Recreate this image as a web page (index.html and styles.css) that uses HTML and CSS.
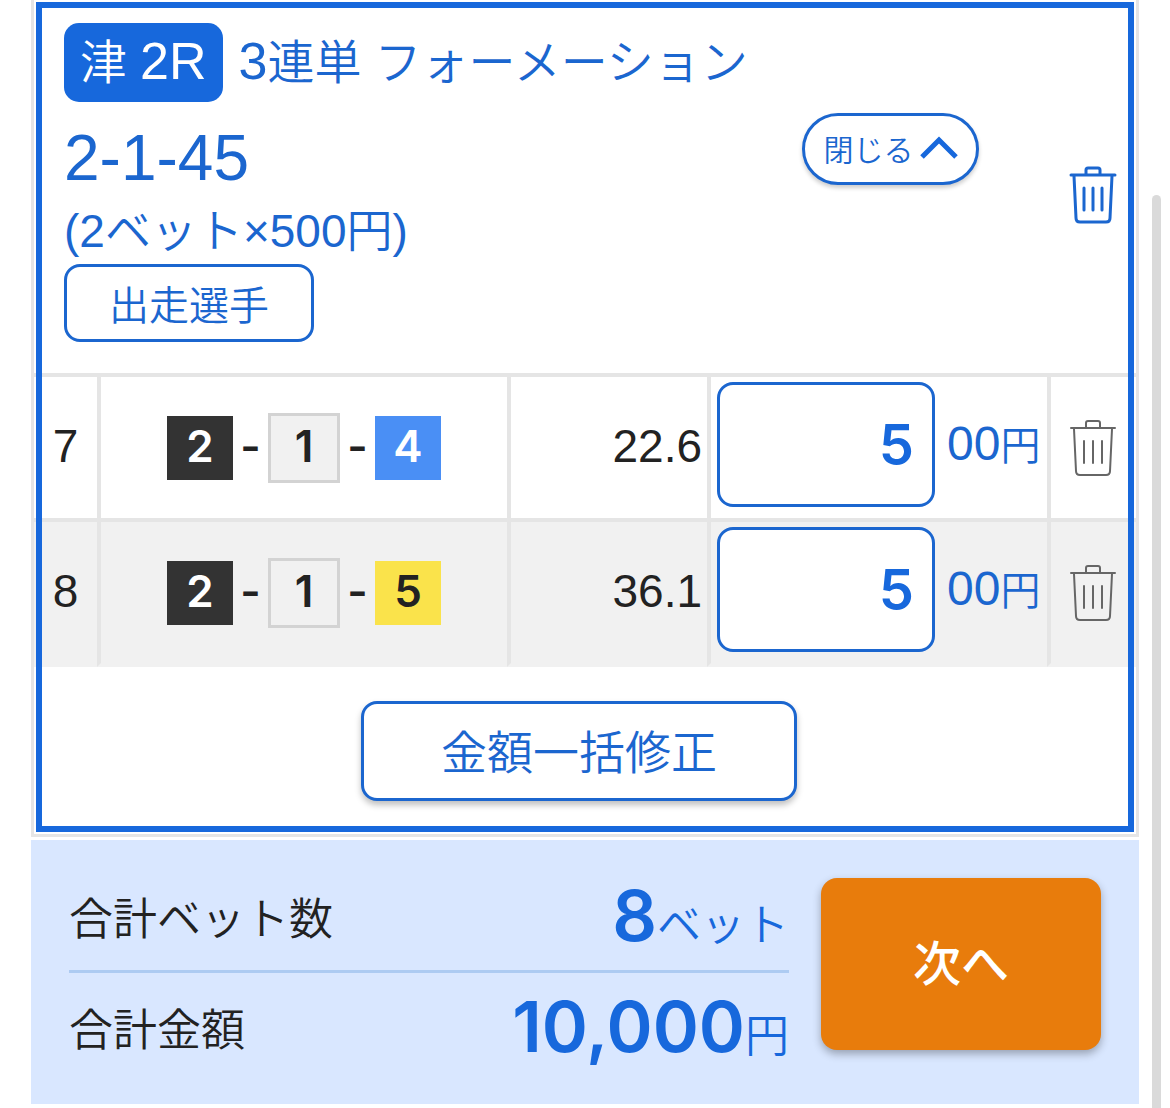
FILE: index.html
```html
<!DOCTYPE html>
<html lang="ja">
<head>
  <meta charset="UTF-8">
  <meta name="viewport" content="width=device-width, initial-scale=1.0">
  <title>ベットリスト</title>
  <link rel="stylesheet" href="styles.css">
</head>
<body>
  <svg class="defs" aria-hidden="true">
    <symbol id="trash" viewBox="0 0 48 58">
      <path d="M2 9H46M17 9V4Q17 2 19 2H29Q31 2 31 4V9M5 10L7 52Q7 56 11 56H37Q41 56 41 52L43 10M15 22V44M24 22V44M33 22V44"/>
    </symbol>
  </svg>

  <main class="bet-card">
    <section class="bet-head">
      <div class="bet-info">
        <h1 class="race"><span class="race-tag">津 <span class="num">2R</span></span><span><span class="num">3</span>連単 フォーメーション</span></h1>
        <p class="numbers">2-1-45</p>
        <p class="amount">(2ベット×500円)</p>
        <button type="button" class="btn btn-racer">出走選手</button>
      </div>
      <button type="button" class="btn btn-close">閉じる
        <svg class="chevron" viewBox="0 0 38 24"><path d="M2 21L19 4L36 21"/></svg>
      </button>
      <button type="button" class="btn-trash main-trash" aria-label="全て削除"><svg><use href="#trash"/></svg></button>
    </section>

    <table class="bets">
      <colgroup>
        <col class="col-no">
        <col>
        <col class="col-odds">
        <col class="col-money">
        <col class="col-del">
      </colgroup>
      <tbody>
        <tr>
          <td class="no">7</td>
          <td>
            <div class="combo"><span class="boat boat2">2</span><span class="dash">-</span><span class="boat boat1">1</span><span class="dash">-</span><span class="boat boat4">4</span></div>
          </td>
          <td class="odds">22.6</td>
          <td class="money"><label><input type="text" inputmode="numeric" value="5"><span class="unit"><span class="num">00</span>円</span></label></td>
          <td class="del"><button type="button" class="btn-trash" aria-label="削除"><svg><use href="#trash"/></svg></button></td>
        </tr>
        <tr>
          <td class="no">8</td>
          <td>
            <div class="combo"><span class="boat boat2">2</span><span class="dash">-</span><span class="boat boat1">1</span><span class="dash">-</span><span class="boat boat5">5</span></div>
          </td>
          <td class="odds">36.1</td>
          <td class="money"><label><input type="text" inputmode="numeric" value="5"><span class="unit"><span class="num">00</span>円</span></label></td>
          <td class="del"><button type="button" class="btn-trash" aria-label="削除"><svg><use href="#trash"/></svg></button></td>
        </tr>
      </tbody>
    </table>

    <div class="bulk">
      <button type="button" class="btn btn-bulk">金額一括修正</button>
    </div>
  </main>

  <footer class="total">
    <dl class="total-list">
      <div class="total-row">
        <dt>合計ベット数</dt>
        <dd><strong>8</strong>ベット</dd>
      </div>
      <div class="total-row">
        <dt>合計金額</dt>
        <dd><strong>10,000</strong>円</dd>
      </div>
    </dl>
    <button type="button" class="btn-next">次へ</button>
  </footer>

  <div class="scrollbar"></div>
</body>
</html>
```
FILE: styles.css
```css
* {
  box-sizing: border-box;
}
body {
  margin: 0;
  padding: 0 31px;
  background: #fff;
  color: #222;
  font-family: "Liberation Sans", "Noto Sans CJK JP", sans-serif;
  font-size: 44px;
  font-weight: 350;
}
h1, p, dl, dd {
  margin: 0;
  font-weight: 350;
}
button, input {
  font-family: inherit;
  font-weight: 350;
  margin: 0;
  padding: 0;
}
button {
  cursor: pointer;
}
.defs {
  display: none;
}
.num {
  font-size: 48px;
  line-height: 1;
}

/* bet card */
.bet-card {
  position: relative;
  border: 3px solid #e5e5e5;
  border-top: none;
}
.bet-card::after {
  content: "";
  position: absolute;
  inset: 2px;
  border: 6px solid #1768dc;
  pointer-events: none;
}
.bet-head {
  display: flex;
  align-items: flex-start;
  padding: 23px 19px 31px 30px;
  color: #1b66cf;
}
.bet-info {
  flex: 1;
}
.race {
  display: flex;
  align-items: center;
  gap: 16px;
  font-size: 47px;
  line-height: 79px;
  white-space: nowrap;
}
.race .num {
  font-size: 52px;
}
.race-tag {
  padding: 0 16px;
  border-radius: 15px;
  background: #1768dc;
  color: #fff;
}
.numbers {
  margin-top: 18px;
  font-size: 64px;
  line-height: 76px;
}
.amount {
  padding-top: 2px;
  font-size: 46px;
  line-height: 66px;
}
.btn {
  display: block;
  border: 3px solid #1b66cf;
  border-radius: 16px;
  background: #fff;
  color: #1b66cf;
}
.btn-racer {
  width: 250px;
  height: 78px;
  font-size: 40px;
}
.btn-close {
  display: flex;
  align-items: center;
  justify-content: center;
  gap: 6px;
  width: 177px;
  height: 72px;
  margin-top: 90px;
  padding-bottom: 2px;
  border-radius: 36px;
  font-size: 30px;
  box-shadow: 0 3px 4px rgba(0, 0, 0, 0.2);
}
.chevron {
  width: 38px;
  height: 24px;
  fill: none;
  stroke: #1768dc;
  stroke-width: 5;
}
.btn-trash {
  display: block;
  border: none;
  background: none;
  color: #666;
}
.btn-trash svg {
  display: block;
  width: 48px;
  height: 58px;
  fill: none;
  stroke: currentColor;
  stroke-width: 2;
  stroke-linecap: round;
}
.main-trash {
  margin: 143px 0 0 90px;
  color: #1b66cf;
}
.main-trash svg {
  stroke-width: 3;
}

/* bet table */
.bets {
  width: 100%;
  table-layout: fixed;
  border-spacing: 0;
}
.col-no {
  width: 63px;
}
.col-odds {
  width: 200px;
}
.col-money {
  width: 340px;
}
.col-del {
  width: 89px;
}
.bets td {
  height: 145px;
  padding: 0;
  border-top: 4px solid #e5e5e5;
  border-left: 4px solid #e5e5e5;
}
.bets td:first-child {
  border-left: none;
}
.bets tr:nth-child(even) td {
  background: #f1f1f1;
  border-bottom: 4px solid #f1f1f1;
  height: 149px;
}
.bets .no,
.bets .odds {
  padding-bottom: 4px;
  font-size: 46px;
}
.no {
  text-align: center;
}
.combo {
  display: flex;
  align-items: center;
  justify-content: center;
  gap: 10px;
  font-family: Inter, sans-serif;
  font-weight: 600;
}
.boat {
  width: 66px;
  padding-bottom: 4px;
  line-height: 60px;
  text-align: center;
}
.boat1 {
  width: 72px;
  border: 3px solid #d3d3d3;
  background: #f1f1f1;
}
.boat2 {
  background: #333;
  color: #fff;
}
.boat4 {
  background: #4a8ff5;
  color: #fff;
}
.boat5 {
  background: #fae34b;
}
.dash {
  display: flex;
  justify-content: center;
  width: 15px;
  padding-bottom: 4px;
}
.bets .odds {
  padding-right: 5px;
  text-align: right;
}
.bets .money {
  padding: 5px 0 11px 6px;
}
.money label {
  display: flex;
  align-items: center;
  gap: 12px;
  color: #1b66cf;
  white-space: nowrap;
}
.money input {
  width: 218px;
  height: 125px;
  padding-right: 18px;
  border: 3px solid #1b66cf;
  border-radius: 16px;
  background: #fff;
  color: #1768dc;
  font-family: Inter, sans-serif;
  font-size: 56px;
  font-weight: 600;
  text-align: right;
}
.unit {
  padding-bottom: 4px;
  font-size: 40px;
}
.bets .del {
  padding-left: 18px;
}
.bulk {
  display: flex;
  justify-content: center;
  padding: 34px 12px 33px 0;
}
.btn-bulk {
  width: 436px;
  height: 100px;
  padding-bottom: 4px;
  font-size: 46px;
  box-shadow: 0 4px 6px rgba(0, 0, 0, 0.25);
}

/* total */
.total {
  display: flex;
  gap: 32px;
  margin-top: 3px;
  padding: 22px 38px 23px;
  background: #d9e7ff;
}
.total-list {
  flex: 1;
}
.total-row {
  display: flex;
  align-items: center;
  justify-content: space-between;
  height: 108px;
}
.total-row:first-child {
  height: 111px;
  border-bottom: 3px solid #adcbf2;
}
.total-row dd {
  color: #1768dc;
}
.total-row strong {
  font-family: Inter, sans-serif;
  font-size: 70px;
  font-weight: 600;
  line-height: 88px;
}
.btn-next {
  width: 280px;
  height: 172px;
  margin-top: 16px;
  padding-bottom: 8px;
  border: none;
  border-radius: 16px;
  background: #e87c0c;
  color: #fff;
  font-size: 48px;
  font-weight: 500;
  box-shadow: 0 4px 8px rgba(0, 0, 0, 0.3);
}

.scrollbar {
  position: fixed;
  top: 195px;
  right: 9px;
  bottom: 0;
  width: 9px;
  border-radius: 5px 5px 0 0;
  background: #dadada;
}
```
